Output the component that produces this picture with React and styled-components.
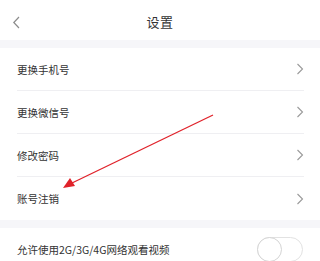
import React from "react";
import styled, { createGlobalStyle } from "styled-components";

const Global = createGlobalStyle`
  html, body { margin: 0; padding: 0; background: #fff; }
  body { font-family: "Noto Sans CJK SC", "Noto Sans", sans-serif; color: #333; overflow: hidden; }
`;

const Page = styled.div`
  position: relative;
  width: 320px;
  height: 261px;
  overflow: hidden;
  background: #fff;
`;

const Header = styled.div`
  height: 40px;
  display: flex;
  align-items: center;
  justify-content: center;
  position: relative;
  padding-top: 3px;
  box-sizing: border-box;
`;

const Back = styled.svg`
  position: absolute;
  left: 12px;
  top: 16px;
`;

const Title = styled.div`
  font-size: 13px;
  color: #333;
  letter-spacing: 0.5px;
`;

const Gap = styled.div`
  height: ${p => p.h}px;
  background: #f6f6f9;
`;

const Group = styled.div`
  background: #fff;
`;

const Row = styled.div`
  height: 43px;
  margin: 0 16px 0 17px;
  display: flex;
  align-items: center;
  justify-content: space-between;
  border-bottom: ${p => (p.last ? "none" : "1px solid #efeff2")};
  box-sizing: border-box;
`;

const Label = styled.span`
  font-size: 10.5px;
  color: #333;
`;

const Chevron = () => (
  <svg width="8" height="12" viewBox="0 0 8 12" style={{ marginRight: 0 }}>
    <path d="M1.5 1 L6.5 6 L1.5 11" fill="none" stroke="#9a9a9a" strokeWidth="1.1" />
  </svg>
);

const Toggle = styled.div`
  width: 46px;
  height: 25px;
  border-radius: 13px;
  border: 1px solid #e2e2e2;
  box-sizing: border-box;
  position: relative;
  margin-right: 1px;
  &::before {
    content: "";
    position: absolute;
    left: -1px;
    top: -1px;
    width: 25px;
    height: 25px;
    border-radius: 50%;
    border: 1px solid #d4d4d4;
    box-sizing: border-box;
    background: #fff;
  }
`;

const Arrow = styled.svg`
  position: absolute;
  left: 0;
  top: 0;
  pointer-events: none;
`;

const items = ["更换手机号", "更换微信号", "修改密码", "账号注销"];

export default function App() {
  return (
    <Page>
      <Global />
      <Header>
        <Back width="9" height="13" viewBox="0 0 9 13">
          <path d="M7 1 L1.8 6.5 L7 12" fill="none" stroke="#8c8c8c" strokeWidth="1.2" />
        </Back>
        <Title>设置</Title>
      </Header>
      <Gap h={8} />
      <Group>
        {items.map((t, i) => (
          <Row key={t} last={i === items.length - 1}>
            <Label>{t}</Label>
            <Chevron />
          </Row>
        ))}
      </Group>
      <Gap h={8} />
      <Group>
        <Row last>
          <Label>允许使用2G/3G/4G网络观看视频</Label>
          <Toggle />
        </Row>
      </Group>
      <Arrow width="320" height="261" viewBox="0 0 320 261">
        <line x1="213" y1="115" x2="72" y2="183" stroke="#e0222a" strokeWidth="1.3" />
        <polygon points="63,188 70,178 75,186" fill="#e0222a" />
      </Arrow>
    </Page>
  );
}
